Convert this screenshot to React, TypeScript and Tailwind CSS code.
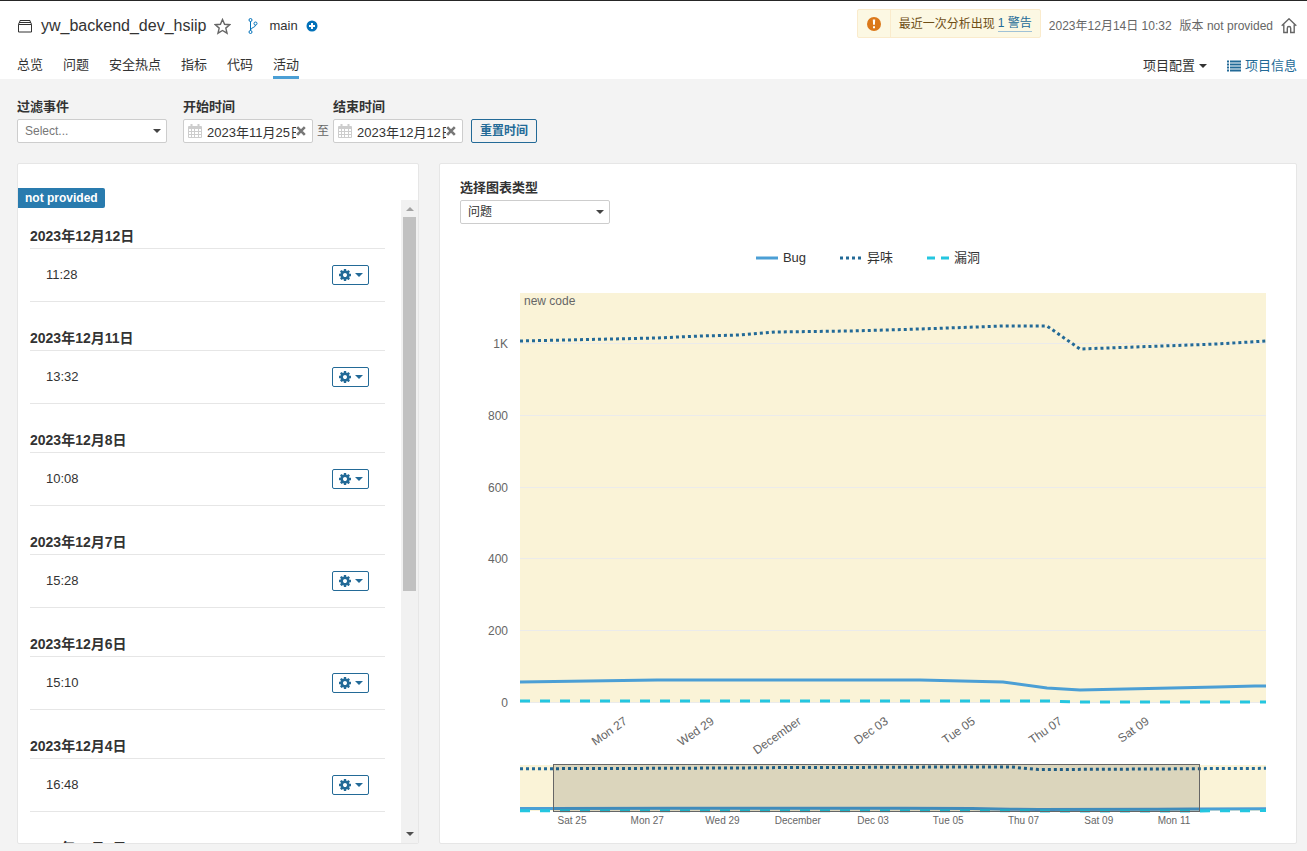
import { useState } from "react";
import type { ReactNode } from "react";

type Point = [number, number];

type Series = {
  name: string;
  color: string;
  dash?: string;
  legendDash?: string;
  points: Point[];
};

// Plot area is 746 x 410, y grows upwards from the zero line
const PLOT_W = 746;
const PLOT_H = 410;
const BRUSH_START = 33;
const BRUSH_W = 647;

const SERIES: Series[] = [
  {
    name: "Bug",
    color: "#4b9fd5",
    points: [
      [0, 21], [137, 23], [400, 23], [483, 21], [527, 15], [560, 13],
      [697, 16], [735, 17], [746, 17],
    ],
  },
  {
    name: "异味",
    color: "#236a97",
    dash: "3,3",
    legendDash: "3,3",
    points: [
      [0, 362], [137, 365], [180, 367], [220, 368], [256, 371], [330, 372],
      [400, 374], [483, 377], [527, 377], [560, 354], [697, 359], [746, 362],
    ],
  },
  {
    name: "漏洞",
    color: "#24c6e0",
    dash: "10,10",
    legendDash: "8,6",
    points: [
      [0, 2], [527, 2], [560, 1], [746, 1],
    ],
  },
];

const Y_TICKS = [
  { label: "1K", y: 359 },
  { label: "800", y: 287 },
  { label: "600", y: 215 },
  { label: "400", y: 144 },
  { label: "200", y: 72 },
  { label: "0", y: 0 },
];

const X_TICKS = ["Mon 27", "Wed 29", "December", "Dec 03", "Tue 05", "Thu 07", "Sat 09"];

const ZOOM_TICKS = [
  "Sat 25", "Mon 27", "Wed 29", "December", "Dec 03", "Tue 05", "Thu 07", "Sat 09", "Mon 11",
];

const ANALYSES = [
  { date: "2023年12月12日", time: "11:28" },
  { date: "2023年12月11日", time: "13:32" },
  { date: "2023年12月8日", time: "10:08" },
  { date: "2023年12月7日", time: "15:28" },
  { date: "2023年12月6日", time: "15:10" },
  { date: "2023年12月4日", time: "16:48" },
  { date: "2023年12月1日", time: "17:02" },
];

const TABS = ["总览", "问题", "安全热点", "指标", "代码", "活动"];

const toPath = (points: Point[]) => "M" + points.map(([x, y]) => `${x},${y}`).join("L");

function Caret({ className }: { className?: string }) {
  return (
    <svg width="8" height="4" viewBox="0 0 8 4" className={className} fill="currentColor">
      <path d="M0 0h8L4 4z" />
    </svg>
  );
}

function ProjectIcon() {
  return (
    <svg width="16" height="16" viewBox="0 0 16 16" fill="none" stroke="#333">
      <path d="M1.5 6.5h13v7.5h-13zM2 4.5h12M3 2.5h10M1.5 6.5l.7-2M14.5 6.5l-.7-2M2.5 4.5l.5-2M13.5 4.5l-.5-2" />
    </svg>
  );
}

function StarIcon() {
  return (
    <svg width="17" height="17" viewBox="0 0 18 18" fill="none" stroke="#666" strokeWidth="1.5">
      <path d="M9 1.6l2.2 5 5.4.5-4.1 3.6 1.3 5.4L9 13.2l-4.8 2.9 1.3-5.4L1.4 7.1l5.4-.5z" />
    </svg>
  );
}

function BranchIcon() {
  return (
    <svg width="16" height="16" viewBox="0 0 16 16" fill="none" stroke="#0271b9">
      <circle cx="5.5" cy="2" r="1.5" />
      <circle cx="5.5" cy="14" r="1.5" />
      <circle cx="10.5" cy="5.5" r="1.5" />
      <path d="M5.5 3.5v9M10.500 7c0 2.800-4.500 2.200-5 5" />
    </svg>
  );
}

function PlusIcon() {
  return (
    <svg width="12" height="12" viewBox="0 0 12 12">
      <circle cx="6" cy="6" r="5.5" fill="#0271b9" />
      <path d="M6 3v6M3 6h6" stroke="#fff" strokeWidth="2" />
    </svg>
  );
}

function WarningIcon() {
  return (
    <svg width="16" height="16" viewBox="0 0 16 16">
      <circle cx="8" cy="8" r="7" fill="#db781a" />
      <path d="M6.8 3.5h2.4l-.3 5.3H7.1zM7 10.2h2v2H7z" fill="#fff" />
    </svg>
  );
}

function HomeIcon() {
  return (
    <svg width="16" height="16" viewBox="0 0 16 16" fill="none" stroke="#666" strokeWidth="1.4">
      <path d="M.7 7.8L8 .8l7.3 7M2.8 6.5v8h3.500v-4.300a1.700 1.700 0 0 1 3.400 0v4.300h3.500v-8" />
    </svg>
  );
}

function ListIcon() {
  return (
    <svg width="14" height="12" viewBox="0 0 14 12" fill="#236a97">
      <path d="M0 .5h2v2H0zM3 .5h11v2H3zM0 3.500h2v2H0zM3 3.500h11v2H3zM0 6.500h2v2H0zM3 6.500h11v2H3zM0 9.500h2v2H0zM3 9.500h11v2H3z" />
    </svg>
  );
}

function CalendarIcon() {
  return (
    <svg width="14" height="14" viewBox="0 0 14 14" fill="none" stroke="#cdcdcd">
      <path d="M.5 2.5h13v11H.5zM.5 4.500h13M.5 7.500h13M.5 10.500h13M3.500 4v9M6.500 4v9M10.500 4v9" />
      <path d="M1 3.500h12M3.500 0v4M10.500 0v4" strokeWidth="2" />
    </svg>
  );
}

function ClearIcon() {
  return (
    <svg width="10" height="10" viewBox="0 0 10 10" stroke="#777" strokeWidth="2.6">
      <path d="M1.2 1.2l7.6 7.6M8.8 1.2L1.2 8.8" />
    </svg>
  );
}

function GearIcon() {
  return (
    <svg width="14" height="14" viewBox="0 0 1792 1792" fill="currentColor">
      <path d="M1152 896q0-106-75-181t-181-75-181 75-75 181 75 181 181 75 181-75 75-181zm512-109v222q0 12-8 23t-20 13l-185 28q-19 54-39 91 35 50 107 138 10 12 10 25t-9 23q-27 37-99 108t-94 71q-12 0-26-9l-138-108q-44 23-91 38-16 136-29 186-7 28-36 28h-222q-14 0-24.5-8.5t-11.5-21.5l-28-184q-49-16-90-37l-141 107q-10 9-25 9-14 0-25-11-126-114-165-168-7-10-7-23 0-12 8-23 15-21 51-66.5t54-70.5q-27-50-41-99l-183-27q-13-2-21-12.5t-8-23.5v-222q0-12 8-23t19-13l186-28q14-46 39-92-40-57-107-138-10-12-10-24 0-10 9-23 26-36 98.5-107.5t94.5-71.5q13 0 26 10l138 107q44-23 91-38 16-136 29-186 7-28 36-28h222q14 0 24.5 8.5t11.5 21.5l28 184q49 16 90 37l142-107q9-9 24-9 13 0 25 10 129 119 165 170 7 8 7 22 0 12-8 23-15 21-51 66.5t-54 70.5q26 50 41 98l183 28q13 2 21 12.5t8 23.5z" />
    </svg>
  );
}

type FieldProps = {
  id: string;
  label: string;
  children: ReactNode;
};

function Field({ id, label, children }: FieldProps) {
  return (
    <div>
      <label htmlFor={id} className="block mb-[2px] text-[13px] leading-5 font-bold">
        {label}
      </label>
      {children}
    </div>
  );
}

function SelectBox({ id, options, muted }: { id: string; options: string[]; muted?: boolean }) {
  return (
    <div className="relative w-[150px]">
      <select
        id={id}
        className={`block w-full h-6 pl-[7px] pr-6 appearance-none rounded-xs border border-[#cdcdcd] bg-white text-xs ${
          muted ? "text-[#777]" : "text-[#333]"
        }`}
      >
        {options.map((option) => (
          <option key={option}>{option}</option>
        ))}
      </select>
      <Caret className="absolute right-[6px] top-[10px] pointer-events-none text-[#444]" />
    </div>
  );
}

function DateInput({ id, initial }: { id: string; initial: string }) {
  const [value, setValue] = useState(initial);

  return (
    <div className="relative w-[130px]">
      <input
        id={id}
        type="text"
        value={value}
        onChange={(e) => setValue(e.target.value)}
        className="block w-full h-6 pl-[23px] pr-4 rounded-xs border border-[#cdcdcd] bg-white text-[13px] text-[#333]"
      />
      <span className="absolute left-[5px] top-[5px] pointer-events-none">
        <CalendarIcon />
      </span>
      <button
        type="button"
        aria-label="清除"
        onClick={() => setValue("")}
        className="absolute right-[7px] top-[7px]"
      >
        <ClearIcon />
      </button>
    </div>
  );
}

function Header() {
  return (
    <header className="border-t border-[#262626] bg-white pl-[17px] pr-[10px] pt-2">
      <div className="flex h-[34px] items-center justify-between">
        <div className="flex items-center">
          <ProjectIcon />
          <a href="#project" className="ml-2 text-base">
            yw_backend_dev_hsiip
          </a>
          <button type="button" aria-label="收藏" className="ml-2">
            <StarIcon />
          </button>
          <span className="ml-[14px]">
            <BranchIcon />
          </span>
          <span className="ml-2 text-[13px]">main</span>
          <button type="button" aria-label="更多分支" className="ml-2">
            <PlusIcon />
          </button>
        </div>

        <div className="flex h-full items-center gap-2 text-xs text-[#666]">
          <div className="flex h-[29px] self-start rounded-xs border border-[#faebcc] bg-[#fcf8e3] text-[#6f4f17]">
            <div className="flex w-8 items-center justify-center">
              <WarningIcon />
            </div>
            <div className="flex items-center gap-[3px] border-l border-[#faebcc] px-2">
              最近一次分析出现
              <a href="#warnings" className="border-b border-[#9fc1d6] leading-4 text-[#236a97]">
                1 警告
              </a>
            </div>
          </div>
          <time>2023年12月14日 10:32</time>
          <span>版本 not provided</span>
          <button type="button" aria-label="设为首页">
            <HomeIcon />
          </button>
        </div>
      </div>

      <div className="flex justify-between pt-3 text-[13px] leading-5">
        <nav className="flex gap-5">
          {TABS.map((tab) => (
            <a
              key={tab}
              href={`#${tab}`}
              className={`border-b-3 pb-px ${
                tab === "活动" ? "border-[#4b9fd5]" : "border-transparent"
              }`}
            >
              {tab}
            </a>
          ))}
        </nav>
        <div className="flex h-[22px] items-center gap-5">
          <button type="button" className="flex items-center gap-1">
            项目配置
            <Caret />
          </button>
          <a href="#info" className="flex items-center gap-1 text-[#236a97]">
            <ListIcon />
            项目信息
          </a>
        </div>
      </div>
    </header>
  );
}

function Filters() {
  return (
    <div className="flex items-end">
      <Field id="events" label="过滤事件">
        <SelectBox id="events" options={["Select...", "版本", "质量阈", "其他"]} muted />
      </Field>
      <div className="ml-4">
        <Field id="from" label="开始时间">
          <DateInput id="from" initial="2023年11月25日" />
        </Field>
      </div>
      <span className="w-5 text-center text-xs leading-6 text-[#666]">至</span>
      <Field id="to" label="结束时间">
        <DateInput id="to" initial="2023年12月12日" />
      </Field>
      <button
        type="button"
        className="ml-2 h-6 px-2 rounded-xs border border-[#236a97] text-xs leading-none font-bold text-[#236a97]"
      >
        重置时间
      </button>
    </div>
  );
}

function AnalysisList() {
  return (
    <section className="flex w-[402px] shrink-0 overflow-hidden rounded-xs border border-[#e6e6e6] bg-white">
      <div className="min-w-0 flex-1 pt-6">
        <div className="w-fit rounded-r-xs bg-[#297bae] px-[7px] text-xs leading-5 font-bold text-white">
          not provided
        </div>
        <ul className="flex flex-col gap-[26px] pl-3 pr-4 pt-[18px]">
          {ANALYSES.map(({ date, time }) => (
            <li key={date}>
              <h2 className="border-b border-[#e6e6e6] pb-[2px] text-sm leading-5 font-bold">
                {date}
              </h2>
              <div className="flex h-[53px] items-center justify-between border-b border-[#e6e6e6] px-4 text-[13px]">
                <time>{time}</time>
                <button
                  type="button"
                  aria-label="操作"
                  className="flex h-5 items-center gap-[3px] rounded-xs border border-[#236a97] px-[5px] text-[#236a97]"
                >
                  <GearIcon />
                  <Caret />
                </button>
              </div>
            </li>
          ))}
        </ul>
      </div>

      {/* Scrollbar */}
      <div className="mt-9 flex w-[17px] shrink-0 flex-col items-center bg-[#f1f1f1]">
        <Caret className="mt-[7px] mb-[6px] shrink-0 rotate-180 text-[#a3a3a3]" />
        <div className="h-[374px] w-[13px] bg-[#c1c1c1]" />
        <Caret className="mb-[7px] mt-auto shrink-0 text-[#505050]" />
      </div>
    </section>
  );
}

function Legend() {
  return (
    <ul className="mt-6 flex justify-center gap-[34px] text-[13px] leading-5">
      {SERIES.map(({ name, color, legendDash }) => (
        <li key={name} className="flex items-center gap-[5px]">
          <svg width="22" height="4" viewBox="0 0 22 4">
            <path d="M0 2h22" stroke={color} strokeWidth="3" strokeDasharray={legendDash} />
          </svg>
          {name}
        </li>
      ))}
    </ul>
  );
}

function HistoryGraph() {
  return (
    <svg
      viewBox="0 0 856 488"
      className="block h-auto w-full overflow-visible"
      fontSize="12"
      fill="#666"
    >
      <g transform="translate(80 25)">
        <rect width={PLOT_W} height={PLOT_H} fill="#faf3d7" />
        {Y_TICKS.map(({ label, y }) => (
          <g key={label}>
            <path d={`M0 ${PLOT_H - y - 0.5}h${PLOT_W}`} stroke="#ebebeb" />
            <text x="-12" y={PLOT_H - y + 4} textAnchor="end">
              {label}
            </text>
          </g>
        ))}
        <text x="4" y="12">
          new code
        </text>
        {X_TICKS.map((label, i) => {
          const x = 108 + i * 87;
          return (
            <text key={label} x={x} y="430" textAnchor="end" transform={`rotate(-35 ${x} 430)`}>
              {label}
            </text>
          );
        })}
        {SERIES.map(({ name, color, dash, points }) => (
          <path
            key={name}
            d={toPath(points.map(([x, y]): Point => [x, PLOT_H - y]))}
            fill="none"
            stroke={color}
            strokeWidth="3"
            strokeDasharray={dash}
          />
        ))}
      </g>
    </svg>
  );
}

function ZoomGraph() {
  const height = 46;

  // Same data squeezed into the brushed range, held flat to both edges
  const shrink = (points: Point[]): Point[] => {
    const inner = points.map(([x, y]): Point => [
      BRUSH_START + (x * BRUSH_W) / PLOT_W,
      height - y * 0.117,
    ]);
    return [[0, inner[0][1]], ...inner, [PLOT_W, inner[inner.length - 1][1] - 0.3]];
  };

  return (
    <svg viewBox="0 0 856 80" className="block h-auto w-full" fontSize="10" fill="#666">
      <g transform="translate(80 9)">
        <rect width={PLOT_W} height={height} fill="#faf3d7" />
        {SERIES.map(({ name, color, dash, points }) => (
          <path
            key={name}
            d={toPath(shrink(points))}
            fill="none"
            stroke={color}
            strokeWidth="3"
            strokeDasharray={dash}
          />
        ))}
        <rect
          x={BRUSH_START + 0.5}
          y="-0.5"
          width={BRUSH_W - 1}
          height={height + 1}
          fill="#000"
          fillOpacity="0.12"
          stroke="#666"
        />
        {ZOOM_TICKS.map((label, i) => (
          <text key={label} x={52 + i * 75.25} y="59" textAnchor="middle">
            {label}
          </text>
        ))}
      </g>
    </svg>
  );
}

export default function App() {
  return (
    <div className="flex h-screen flex-col bg-[#f3f3f3] font-['Liberation_Sans','Noto_Sans_CJK_SC',sans-serif] text-[#333]">
      <Header />
      <main className="flex min-h-0 flex-1 flex-col gap-5 pl-[17px] pr-[10px] pt-[18px] pb-[7px]">
        <Filters />
        <div className="flex min-h-0 flex-1 gap-5">
          <AnalysisList />
          <section className="min-w-0 flex-1 overflow-hidden rounded-xs border border-[#e6e6e6] bg-white">
            <div className="px-5 pt-[14px]">
              <Field id="graph-type" label="选择图表类型">
                <SelectBox id="graph-type" options={["问题", "覆盖率", "重复", "自定义"]} />
              </Field>
            </div>
            <Legend />
            <HistoryGraph />
            <ZoomGraph />
          </section>
        </div>
      </main>
    </div>
  );
}
